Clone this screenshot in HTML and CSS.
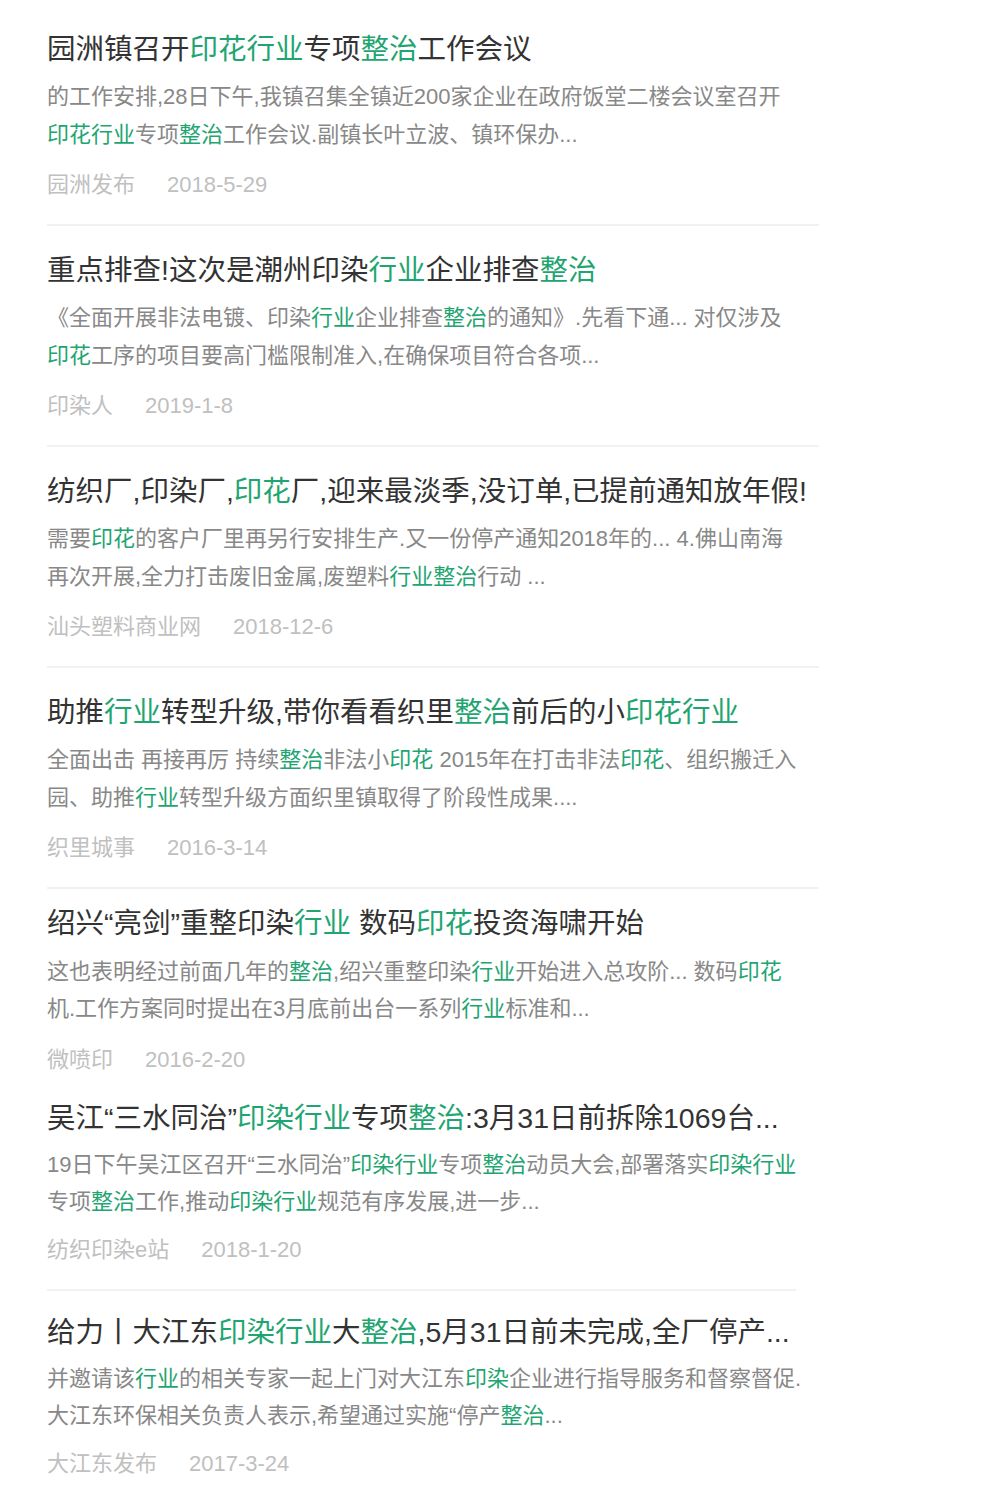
FILE: index.html
```html
<!DOCTYPE html>
<html lang="zh-CN">
<head>
  <meta charset="UTF-8">
  <title>搜索结果</title>
  <link rel="stylesheet" href="styles.css">
</head>
<body>

  <!-- 文章列表 -->
  <div class="lista">

    <div class="item">
      <h3 class="titulo">园洲镇召开<em>印花行业</em>专项<em>整治</em>工作会议</h3>
      <p class="resumo">的工作安排,28日下午,我镇召集全镇近200家企业在政府饭堂二楼会议室召开<br><em>印花行业</em>专项<em>整治</em>工作会议.副镇长叶立波、镇环保办...</p>
      <div class="meta"><span>园洲发布</span><span>2018-5-29</span></div>
    </div>

    <div class="item">
      <h3 class="titulo">重点排查!这次是潮州印染<em>行业</em>企业排查<em>整治</em></h3>
      <p class="resumo">《全面开展非法电镀、印染<em>行业</em>企业排查<em>整治</em>的通知》.先看下通... 对仅涉及<br><em>印花</em>工序的项目要高门槛限制准入,在确保项目符合各项...</p>
      <div class="meta"><span>印染人</span><span>2019-1-8</span></div>
    </div>

    <div class="item">
      <h3 class="titulo">纺织厂,印染厂,<em>印花</em>厂,迎来最淡季,没订单,已提前通知放年假!</h3>
      <p class="resumo">需要<em>印花</em>的客户厂里再另行安排生产.又一份停产通知2018年的... 4.佛山南海<br>再次开展,全力打击废旧金属,废塑料<em>行业整治</em>行动 ...</p>
      <div class="meta"><span>汕头塑料商业网</span><span>2018-12-6</span></div>
    </div>

    <div class="item colado">
      <h3 class="titulo">助推<em>行业</em>转型升级,带你看看织里<em>整治</em>前后的小<em>印花行业</em></h3>
      <p class="resumo">全面出击 再接再厉 持续<em>整治</em>非法小<em>印花</em> 2015年在打击非法<em>印花</em>、组织搬迁入<br>园、助推<em>行业</em>转型升级方面织里镇取得了阶段性成果....</p>
      <div class="meta"><span>织里城事</span><span>2016-3-14</span></div>
    </div>

    <div class="item denso solto sem-linha">
      <h3 class="titulo">绍兴“亮剑”重整印染<em>行业</em> 数码<em>印花</em>投资海啸开始</h3>
      <p class="resumo">这也表明经过前面几年的<em>整治</em>,绍兴重整印染<em>行业</em>开始进入总攻阶... 数码<em>印花</em><br>机.工作方案同时提出在3月底前出台一系列<em>行业</em>标准和...</p>
      <div class="meta"><span>微喷印</span><span>2016-2-20</span></div>
    </div>

    <div class="item denso curta">
      <h3 class="titulo">吴江“三水同治”<em>印染行业</em>专项<em>整治</em>:3月31日前拆除1069台...</h3>
      <p class="resumo">19日下午吴江区召开“三水同治”<em>印染行业</em>专项<em>整治</em>动员大会,部署落实<em>印染行业</em><br>专项<em>整治</em>工作,推动<em>印染行业</em>规范有序发展,进一步...</p>
      <div class="meta"><span>纺织印染e站</span><span>2018-1-20</span></div>
    </div>

    <div class="item denso sem-linha">
      <h3 class="titulo">给力丨大江东<em>印染行业</em>大<em>整治</em>,5月31日前未完成,全厂停产...</h3>
      <p class="resumo">并邀请该<em>行业</em>的相关专家一起上门对大江东<em>印染</em>企业进行指导服务和督察督促.<br>大江东环保相关负责人表示,希望通过实施“停产<em>整治</em>...</p>
      <div class="meta"><span>大江东发布</span><span>2017-3-24</span></div>
    </div>

  </div>

</body>
</html>
```

FILE: styles.css
```css
body {
  margin: 0;
  padding: 29px 0 0 47px;
  background: #ffffff;
  font-family: "Liberation Sans", "Noto Sans CJK SC", sans-serif;
}

/* Lista de resultados */
.lista {
  width: 772px;
}

.item {
  padding-bottom: 24px;
  margin-bottom: 24px;
  border-bottom: 2px solid #f2f2f2;
}

.item.colado {
  margin-bottom: 14px;
}

.item.sem-linha {
  border-bottom: none;
  padding-bottom: 0;
  margin-bottom: 23px;
}

.item.curta {
  width: 749px;
  margin-bottom: 21px;
}

.titulo {
  margin: 0;
  font-size: 28.5px;
  font-weight: normal;
  line-height: 40px;
  color: #333333;
  white-space: nowrap;
}

.resumo {
  margin: 9px 0 0;
  font-size: 22px;
  line-height: 38px;
  color: #888888;
  white-space: nowrap;
}

em {
  font-style: normal;
  color: #1fa572;
}

.meta {
  margin-top: 16px;
  display: flex;
  gap: 32px;
  font-size: 22px;
  line-height: 30px;
  color: #c0c0c0;
}

/* Itens finais com linhas mais juntas */
.denso .resumo {
  margin-top: 8px;
  line-height: 37px;
}

.denso .meta {
  margin-top: 15px;
}

.solto .resumo {
  margin-top: 10px;
}

.solto .meta {
  margin-top: 18px;
}
```
